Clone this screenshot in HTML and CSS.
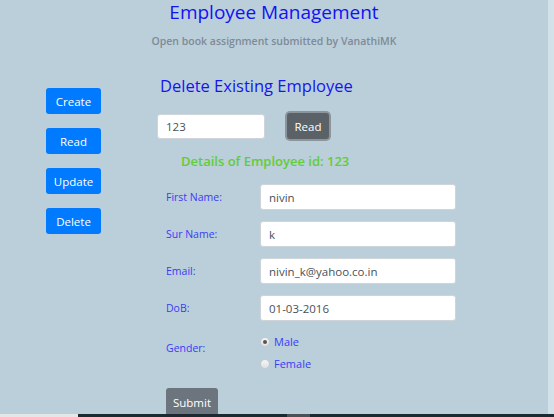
FILE: index.html
```html
<!DOCTYPE html>
<html>
<head>
<meta charset="utf-8">
<link rel="stylesheet" href="styles.css">
</head>
<body>
<div class="page">
  <header class="header">
    <h1 class="title">Employee Management</h1>
    <p class="subtitle">Open book assignment submitted by VanathiMK</p>
  </header>
  <div class="layout">
    <nav class="sidebar">
      <button class="btn btn-primary">Create</button>
      <button class="btn btn-primary">Read</button>
      <button class="btn btn-primary">Update</button>
      <button class="btn btn-primary">Delete</button>
    </nav>
    <main class="main">
      <h2 class="section-title">Delete Existing Employee</h2>
      <div class="search-row">
        <input class="field search-field" type="text" value="123">
        <button class="btn btn-dark">Read</button>
      </div>
      <h3 class="details">Details of Employee id: 123</h3>
      <form class="form">
        <div class="form-row">
          <label class="label">First Name:</label>
          <input class="field" type="text" value="nivin">
        </div>
        <div class="form-row">
          <label class="label">Sur Name:</label>
          <input class="field" type="text" value="k">
        </div>
        <div class="form-row">
          <label class="label">Email:</label>
          <input class="field" type="text" value="nivin_k@yahoo.co.in">
        </div>
        <div class="form-row">
          <label class="label">DoB:</label>
          <input class="field" type="text" value="01-03-2016">
        </div>
        <div class="form-row gender-row">
          <label class="label">Gender:</label>
          <div class="radios">
            <label class="radio"><span class="dot checked"></span>Male</label>
            <label class="radio"><span class="dot"></span>Female</label>
          </div>
        </div>
        <button type="button" class="btn btn-secondary">Submit</button>
      </form>
    </main>
  </div>
</div>
<div class="edge"></div>
<div class="taskbar"><span class="tb-left"></span><span class="tb-mid"></span><span class="tb-thumb"></span><span class="tb-rest"></span></div>
</body>
</html>
```
FILE: styles.css
```css
* { box-sizing: border-box; }
html, body { margin: 0; padding: 0; }
body {
  width: 554px;
  height: 417px;
  overflow: hidden;
  background: #bacfda;
  font-family: "Open Sans", "Noto Sans", sans-serif;
  display: flex;
}
.page {
  width: 548px;
  flex: none;
}
.edge {
  width: 6px;
  flex: none;
  background: #d3e2ea;
}
.header {
  text-align: center;
}
.title {
  margin: 0;
  font-size: 19px;
  font-weight: 400;
  line-height: 24px;
  color: #1212f2;
}
.subtitle {
  margin: 8px 0 0;
  font-size: 10.5px;
  font-weight: 600;
  line-height: 18px;
  color: #7f8a96;
}
.layout {
  display: flex;
  margin-top: 26px;
}
.sidebar {
  width: 157px;
  padding-left: 46px;
  padding-top: 12px;
  display: flex;
  flex-direction: column;
  gap: 14px;
  flex: none;
}
.btn {
  font-family: inherit;
  font-size: 11.5px;
  color: #fff;
  border: none;
  border-radius: 3px;
  height: 26px;
  padding: 0;
  cursor: pointer;
}
.btn-primary {
  width: 55px;
  background: #007bff;
}
.main {
  flex: 1;
}
.section-title {
  margin: 0 0 0 3px;
  font-size: 16.5px;
  font-weight: 400;
  line-height: 20px;
  color: #1515f0;
}
.search-row {
  display: flex;
  align-items: center;
  gap: 22px;
  margin-top: 18px;
}
.field {
  width: 196px;
  height: 26px;
  border: 1px solid #ced4da;
  border-radius: 3px;
  background: #fff;
  padding: 0 8px;
  font-family: inherit;
  font-size: 11.5px;
  color: #495057;
  outline: none;
}
.search-field {
  width: 108px;
  height: 25px;
}
.btn-dark {
  width: 42px;
  background: #5a6268;
  box-shadow: 0 0 0 2px #8c959c;
  margin-top: -1px;
}
.details {
  margin: 13px 0 0 24px;
  font-size: 13px;
  font-weight: 600;
  line-height: 18px;
  color: #62cc36;
}
.form {
  margin-top: 14px;
  padding-left: 9px;
}
.form-row {
  display: flex;
  align-items: center;
  margin-bottom: 11px;
}
.label {
  width: 94px;
  font-size: 10.5px;
  color: #3b3bf6;
}
.gender-row {
  align-items: flex-start;
  margin-top: 13px;
  margin-bottom: 16px;
}
.gender-row .label {
  margin-top: 7px;
}
.radios {
  display: flex;
  flex-direction: column;
  gap: 6px;
}
.radio {
  display: flex;
  align-items: center;
  gap: 4px;
  font-size: 11px;
  line-height: 16px;
  color: #3b3bf6;
}
.dot {
  width: 10px;
  height: 10px;
  border-radius: 50%;
  background: linear-gradient(#f4f5f6, #dfe2e5);
  border: 1px solid #c4c9ce;
  display: inline-block;
  position: relative;
}
.dot.checked::after {
  content: "";
  position: absolute;
  left: 2px;
  top: 2px;
  width: 4px;
  height: 4px;
  border-radius: 50%;
  background: #555;
}
.btn-secondary {
  width: 52px;
  height: 28px;
  background: #6c757d;
}
.taskbar {
  position: fixed;
  left: 0;
  bottom: 0;
  width: 554px;
  height: 3px;
  display: flex;
}
.tb-left { width: 78px; background: #e4e6e8; }
.tb-mid { width: 209px; background: #1b2a31; }
.tb-thumb { width: 23px; background: #4b5257; }
.tb-rest { flex: 1; background: #1b2a31; }
```
